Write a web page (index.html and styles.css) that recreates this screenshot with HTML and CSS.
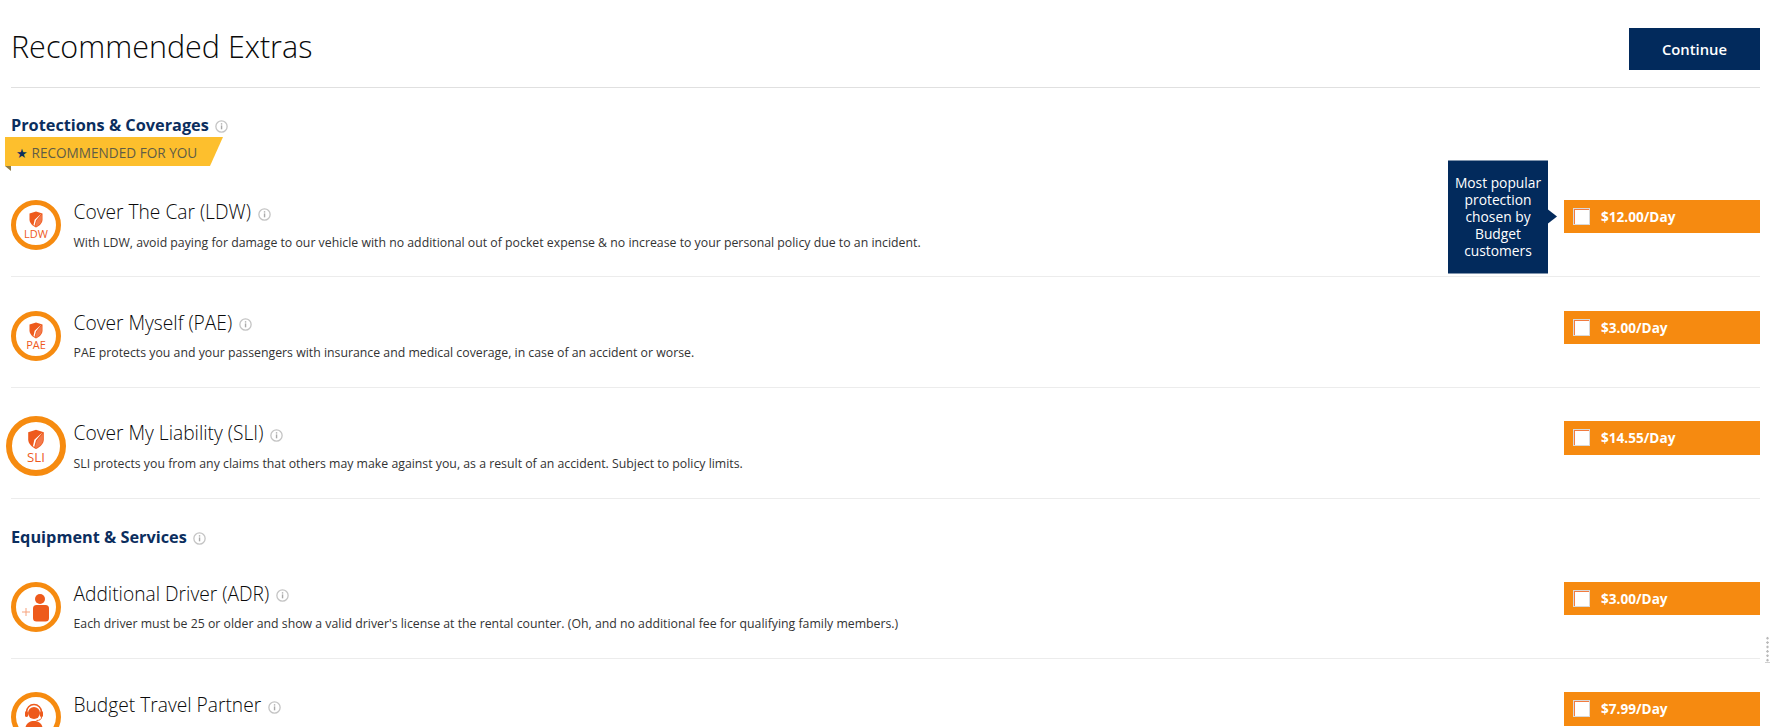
FILE: index.html
```html
<!DOCTYPE html>
<html lang="en">
<head>
<meta charset="utf-8">
<title>Recommended Extras</title>
<link rel="stylesheet" href="styles.css">
</head>
<body>
<svg class="defs" width="0" height="0" aria-hidden="true">
  <symbol id="info" viewBox="0 0 12 12">
    <circle cx="6" cy="6" r="5.200" fill="none" stroke="#c4c4c4" stroke-width="1.200"/>
    <rect x="5.400" y="5" width="1.300" height="3.600" fill="#a9a9a9"/>
    <rect x="5.400" y="3" width="1.300" height="1.200" fill="#a9a9a9"/>
  </symbol>
  <symbol id="shield" viewBox="0 0 14 17">
    <path d="M.5 2.500 7 .5l6.500 2v6c0 3.500-3 6.300-6.500 8C3.500 14.800.5 12 .5 8.500z" fill="#ee5a1c"/>
    <path d="M12.500 2.500 5.600 8.800 4.500 14l1 .8 1.500-5.500z" fill="#fff"/>
    <path d="M12.800 3.500 7.600 9.600 6.200 15.200l.8.600c3-1.700 5.800-4 5.800-7.300z" fill="#f4794a"/>
  </symbol>
</svg>
<main class="page">
  <header class="top">
    <h1 class="title">Recommended Extras</h1>
    <button class="continue" type="button">Continue</button>
  </header>

  <section class="group">
    <h2 class="group-head">Protections &amp; Coverages <svg class="info"><use href="#info"/></svg></h2>
    <div class="ribbon"><span class="ribbon-text"><span class="star">★</span> RECOMMENDED FOR YOU</span></div>

    <article class="row">
      <div class="badge"><svg class="shield"><use href="#shield"/></svg><span class="code">LDW</span></div>
      <div class="body">
        <h3 class="name">Cover The Car (LDW) <svg class="info"><use href="#info"/></svg></h3>
        <p class="desc">With LDW, avoid paying for damage to our vehicle with no additional out of pocket expense &amp; no increase to your personal policy due to an incident.</p>
      </div>
      <div class="price">
        <div class="tip">Most popular protection chosen by Budget customers</div>
        <span class="check"></span><span class="amount">$12.00/Day</span>
      </div>
    </article>

    <article class="row">
      <div class="badge"><svg class="shield"><use href="#shield"/></svg><span class="code">PAE</span></div>
      <div class="body">
        <h3 class="name">Cover Myself (PAE) <svg class="info"><use href="#info"/></svg></h3>
        <p class="desc">PAE protects you and your passengers with insurance and medical coverage, in case of an accident or worse.</p>
      </div>
      <div class="price"><span class="check"></span><span class="amount">$3.00/Day</span></div>
    </article>

    <article class="row">
      <div class="badge badge-hover"><svg class="shield"><use href="#shield"/></svg><span class="code">SLI</span></div>
      <div class="body">
        <h3 class="name">Cover My Liability (SLI) <svg class="info"><use href="#info"/></svg></h3>
        <p class="desc">SLI protects you from any claims that others may make against you, as a result of an accident. Subject to policy limits.</p>
      </div>
      <div class="price"><span class="check"></span><span class="amount">$14.55/Day</span></div>
    </article>
  </section>

  <section class="group">
    <h2 class="group-head group-head-next">Equipment &amp; Services <svg class="info"><use href="#info"/></svg></h2>

    <article class="row">
      <div class="badge">
        <svg class="pict" viewBox="0 0 40 40">
          <circle cx="24" cy="12" r="5" fill="#ee5a1c"/>
          <rect x="17" y="18" width="16" height="16.500" rx="3.500" fill="#ee5a1c"/>
          <path d="M6 25h8M10 21v8" stroke="#f7a27c" stroke-width="1" fill="none"/>
        </svg>
      </div>
      <div class="body">
        <h3 class="name">Additional Driver (ADR) <svg class="info"><use href="#info"/></svg></h3>
        <p class="desc">Each driver must be 25 or older and show a valid driver's license at the rental counter. (Oh, and no additional fee for qualifying family members.)</p>
      </div>
      <div class="price"><span class="check"></span><span class="amount">$3.00/Day</span></div>
    </article>

    <article class="row">
      <div class="badge">
        <svg class="pict" viewBox="0 0 40 40">
          <circle cx="18" cy="16" r="6" fill="#ee5a1c"/>
          <path d="M10.500 17v-2a7.500 7.500 0 0 1 15 0v2" fill="none" stroke="#ee5a1c" stroke-width="1.500"/>
          <rect x="9" y="14" width="3" height="6" rx="1.500" fill="#ee5a1c"/>
          <rect x="24" y="14" width="3" height="6" rx="1.500" fill="#ee5a1c"/>
          <path d="M25.500 20c0 2.500-2 3.500-5 3.500" fill="none" stroke="#ee5a1c" stroke-width="1"/>
          <path d="M9 34c0-7 4-10 9-10s9 3 9 10z" fill="#ee5a1c"/>
        </svg>
      </div>
      <div class="body">
        <h3 class="name name-last">Budget Travel Partner <svg class="info"><use href="#info"/></svg></h3>
      </div>
      <div class="price"><span class="check"></span><span class="amount">$7.99/Day</span></div>
    </article>
  </section>
  <div class="grip" aria-hidden="true"></div>
</main>
</body>
</html>
```
FILE: styles.css
```css
* { box-sizing: border-box; }
html, body { margin: 0; padding: 0; height: 727px; overflow: hidden; background: #fff; }
body { font-family: "Open Sans", "Liberation Sans", sans-serif; color: #1d1d1d; }
.defs { position: absolute; }
.page { position: relative; height: 727px; padding: 0 10px 0 11px; overflow: hidden; }

.top { display: flex; justify-content: space-between; align-items: flex-start; height: 88px; padding-top: 28px; border-bottom: 1px solid #e0e0e0; }
.title { margin: -2px 0 0; font-size: 30.500px; line-height: 40px; font-weight: 300; color: #0a0a0a; }
.continue { width: 131px; height: 42px; padding: 0; border: 0; background: #022a5c; color: #fff; font: 600 14.800px/42px "Open Sans", sans-serif; }

.group-head { margin: 25px 0 0; height: 24px; font-size: 16.300px; line-height: 24px; font-weight: 700; color: #0b2e5e; }
.group-head-next { margin-top: 26.700px; height: 23px; }
.info { display: inline-block; width: 13px; height: 13px; margin-left: 2px; vertical-align: -1.500px; }

.ribbon { position: relative; height: 29.800px; margin-left: -6px; }
.ribbon::before { content: ""; position: absolute; left: 0; top: 0; width: 218px; height: 29px; background: #fdbf2d; clip-path: polygon(0 0, 100% 0, 205px 100%, 0 100%); }
.ribbon::after { content: ""; position: absolute; left: 0; top: 29px; border-top: 5px solid #8d7b45; border-left: 6px solid transparent; }
.ribbon-text { position: relative; display: block; padding-left: 11px; font-size: 13.600px; line-height: 31px; color: #605c46; white-space: nowrap; }
.star { color: #0b2e5e; font-size: 13px; }

.row { display: flex; align-items: flex-start; height: 110.600px; padding-top: 33.300px; border-bottom: 1px solid #ececec; }
.badge { flex: none; position: relative; display: flex; flex-direction: column; align-items: center; width: 50px; height: 50px; border: 5px solid #f68b10; border-radius: 50%; background: #fff; }
.badge-hover { transform: scale(1.200); }
.shield { width: 14px; height: 17px; margin-top: 6px; }
.code { font-size: 11px; line-height: 12px; font-weight: 500; color: #ee5a1c; }
.pict { position: absolute; left: 0; top: 0; width: 40px; height: 40px; }

.body { flex: 1; margin-left: 12.500px; }
.name { margin: 0; font-size: 19.200px; line-height: 24px; font-weight: 300; color: #0a0a0a; }
.name-last { margin-top: 1px; }
.desc { margin: 9.500px 0 0; font-size: 12.300px; line-height: 18px; color: #333; }

.price { position: relative; flex: none; display: flex; align-items: center; width: 196px; height: 33.400px; padding-left: 9px; background: #f68a10; }
.check { width: 17px; height: 17px; background: #fff; border: 1px solid #d9d9d9; box-shadow: inset 1px 1px 0 #f27b3f; }
.amount { margin-left: 11px; font-size: 13.600px; font-weight: 700; color: #fff; }
.tip { position: absolute; right: 100%; top: 50%; width: 100px; margin-right: 16px; padding: 13px 3px 15px; transform: translateY(-50%); background: #022a5c; color: #fff; font-size: 13.800px; line-height: 17px; text-align: center; }
.tip::after { content: ""; position: absolute; left: 100%; top: 50%; margin-top: -7px; border-left: 9px solid #022a5c; border-top: 7px solid transparent; border-bottom: 7px solid transparent; }

.grip { position: absolute; left: 1765px; top: 636px; width: 5px; height: 27px; background-image: radial-gradient(circle, #b9b9b9 1px, transparent 1.400px); background-size: 5px 4.400px; border-bottom: 1px solid #d0d0d0; }
```
